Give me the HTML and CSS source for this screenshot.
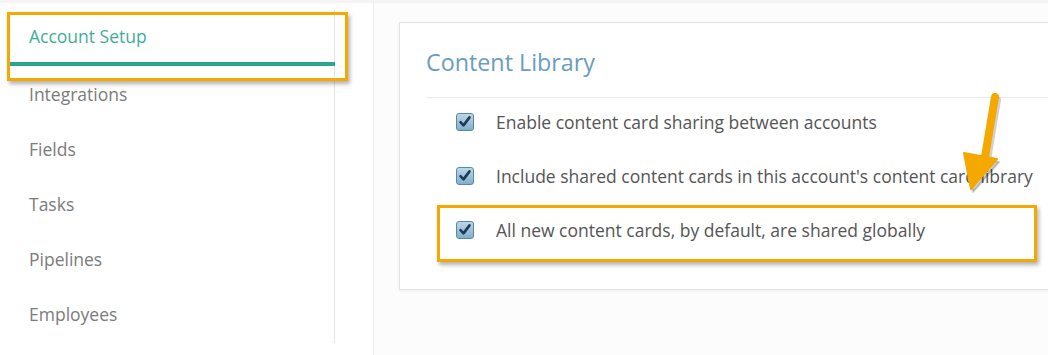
FILE: index.html
```html
<!DOCTYPE html>
<html>
  <head>
    <title>Account Setup</title>
    <link rel="stylesheet" href="styles.css">
  </head>
  <body>
    <div class="layout">
      <aside class="sidebar">
        <ul class="nav">
          <li class="nav-item active">Account Setup</li>
          <li class="nav-item">Integrations</li>
          <li class="nav-item">Fields</li>
          <li class="nav-item">Tasks</li>
          <li class="nav-item">Pipelines</li>
          <li class="nav-item">Employees</li>
        </ul>
        <div class="mark mark-nav"></div>
      </aside>
      <main class="main">
        <section class="card">
          <h2 class="card-title">Content Library</h2>
          <ul class="options">
            <li class="option">
              <span class="check"><svg viewBox="0 0 16 16"><path d="M3.5 8.2l3 3.2 6-8" /></svg></span>
              Enable content card sharing between accounts
            </li>
            <li class="option">
              <span class="check"><svg viewBox="0 0 16 16"><path d="M3.5 8.2l3 3.2 6-8" /></svg></span>
              Include shared content cards in this account's content card library
            </li>
            <li class="option">
              <span class="check"><svg viewBox="0 0 16 16"><path d="M3.5 8.2l3 3.2 6-8" /></svg></span>
              All new content cards, by default, are shared globally
            </li>
          </ul>
        </section>
        <div class="mark mark-option"></div>
        <svg class="arrow" viewBox="0 0 60 110" width="60" height="110">
          <g class="arrow-shadow" transform="translate(2 3)">
            <path d="M41 6 L31 66" />
            <polygon points="10,62 43,68 17,98" />
          </g>
          <g class="arrow-body">
            <path d="M41 6 L31 66" />
            <polygon points="10,62 43,68 17,98" />
          </g>
        </svg>
      </main>
    </div>
  </body>
</html>
```

FILE: styles.css
```css
* {
  margin: 0;
  padding: 0;
  box-sizing: border-box;
}

html, body {
  height: 100%;
  overflow: hidden;
}

body {
  font-family: 'Open Sans', 'Noto Sans', sans-serif;
  background: #ffffff;
  border-top: 3px solid #f4f4f4;
}

.layout {
  display: flex;
  height: 100%;
}

.sidebar {
  position: relative;
  width: 374px;
  flex-shrink: 0;
  border-right: 1px solid #ececec;
  padding: 7px 0 0 10px;
}

.nav {
  list-style: none;
  width: 325px;
  height: 333px;
  border-right: 1px solid #e4e4e4;
}

.nav-item {
  height: 55px;
  display: flex;
  align-items: center;
  padding-left: 19px;
  padding-bottom: 3px;
  font-size: 17.5px;
  color: #7b7b7b;
}

.nav-item.active {
  height: 56px;
  padding-bottom: 0;
  color: #3fae98;
  border-bottom: 4px solid #27a88e;
  margin-right: -1px;
  margin-bottom: 2px;
}

.main {
  position: relative;
  flex: 1;
  background: #fcfcfc;
  padding: 19px 0 0 25px;
  overflow: hidden;
}

.card {
  width: 700px;
  height: 268px;
  background: #ffffff;
  border: 1px solid #e3e3e3;
  box-shadow: 0 1px 3px rgba(0, 0, 0, 0.06);
  padding: 25px 0 0 26px;
}

.card-title {
  font-size: 23.3px;
  font-weight: 400;
  line-height: 28px;
  color: #6a9cc2;
  margin-bottom: 21px;
}

.options {
  list-style: none;
  border-top: 1px solid #ebebeb;
  padding: 0 0 0 30px;
  display: flex;
  flex-direction: column;
  gap: 6px;
}

.option {
  height: 48px;
  display: flex;
  align-items: center;
  gap: 22px;
  font-size: 17.5px;
  color: #555555;
  white-space: nowrap;
}

.check {
  width: 18px;
  height: 18px;
  border: 1px solid #5b87a6;
  border-radius: 3px;
  background: linear-gradient(#bcd7e9, #82afcd);
  display: flex;
  align-items: center;
  justify-content: center;
}

.check svg {
  width: 16px;
  height: 16px;
  fill: none;
  stroke: #1d3b55;
  stroke-width: 2.6;
  stroke-linecap: round;
  stroke-linejoin: round;
}

/* annotation marks */
.mark {
  position: absolute;
  border: 3px solid #f5a800;
  box-shadow: 2px 3px 4px rgba(0, 0, 0, 0.3);
}

.mark-nav {
  left: 7px;
  top: 9px;
  width: 341px;
  height: 69px;
}

.mark-option {
  left: 63px;
  top: 202px;
  width: 600px;
  height: 57px;
}

.arrow {
  position: absolute;
  left: 580px;
  top: 88px;
}

.arrow path {
  fill: none;
  stroke-width: 8;
  stroke-linecap: round;
}

.arrow polygon {
  stroke-width: 2;
  stroke-linejoin: round;
}

.arrow-shadow path,
.arrow-shadow polygon {
  stroke: rgba(0, 0, 0, 0.18);
}

.arrow-shadow polygon {
  fill: rgba(0, 0, 0, 0.18);
}

.arrow-body path,
.arrow-body polygon {
  stroke: #f5a800;
}

.arrow-body polygon {
  fill: #f5a800;
}
```
